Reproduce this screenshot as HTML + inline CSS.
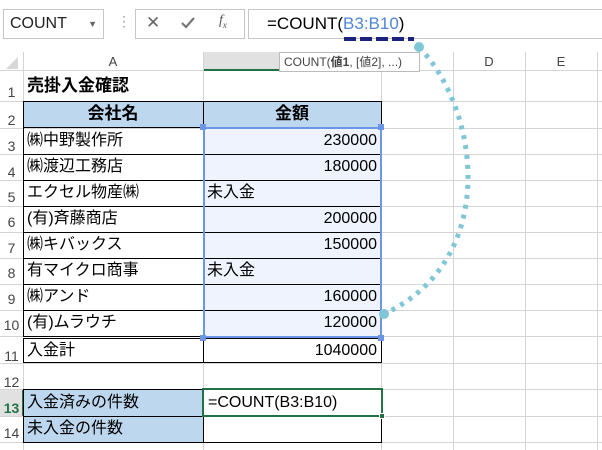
<!DOCTYPE html><html><head><meta charset="utf-8"><style>
body{margin:0;width:602px;height:450px;overflow:hidden;background:#fff;font-family:"Liberation Sans","Noto Sans CJK JP",sans-serif;position:relative}
div{position:absolute;box-sizing:border-box}
.vl{width:1px;background:#d4d4d4}
.hl{height:1px;background:#d4d4d4}
.rh{left:0;width:23px;text-align:center;font-size:14px;color:#444;}
.c{font-size:16px;color:#000;white-space:nowrap;line-height:24px}
.r{text-align:right;padding-right:4px}
</style></head><body>
<div style="left:3px;top:9px;width:101px;height:30px;border:1px solid #c6c6c6;font-size:16px;line-height:28px;padding-left:6px;color:#222">COUNT<span style="position:absolute;right:6px;top:0;font-size:9px;color:#666">▼</span></div>
<div style="left:117px;top:13px;font-size:14px;color:#999">⋮</div>
<div style="left:135px;top:9px;width:110px;height:30px;border:1px solid #c6c6c6"></div>
<div style="left:146px;top:13px;font-size:17px;color:#666">✕</div>
<svg style="position:absolute;left:181px;top:17px" width="14" height="12"><path d="M1 6 L5 10 L13 1" fill="none" stroke="#777" stroke-width="2.2"/></svg>
<div style="left:219px;top:13px;font-size:14px;color:#555;font-style:italic;font-family:'Liberation Serif',serif">f<sub style="font-size:9px">x</sub></div>
<div style="left:248px;top:9px;width:360px;height:30px;border:1px solid #c6c6c6;font-size:17px;line-height:28px;padding-left:18px;color:#000">=COUNT(<span style="color:#4f86d6">B3:B10</span>)</div>
<div style="left:344px;top:37px;width:70px;height:4px;background:repeating-linear-gradient(90deg,#1a237e 0 12px,transparent 12px 16px)"></div>
<div style="left:0;top:52px;width:602px;height:19px;background:#fff;border-bottom:1px solid #d4d4d4"></div>
<div style="left:203px;top:52px;width:178px;height:19px;background:#e1e1e1;border-bottom:2px solid #217346"></div>
<div style="left:6px;top:57px;width:0;height:0;border-left:12px solid transparent;border-bottom:12px solid #d8d8d8"></div>
<div style="left:23px;top:54px;width:180px;text-align:center;font-size:13px;color:#444">A</div>
<div style="left:453px;top:54px;width:72px;text-align:center;font-size:13px;color:#444">D</div>
<div style="left:525px;top:54px;width:72px;text-align:center;font-size:13px;color:#444">E</div>
<div class="vl" style="left:23px;top:52px;height:398px"></div>
<div class="vl" style="left:203px;top:52px;height:398px"></div>
<div class="vl" style="left:381px;top:52px;height:398px"></div>
<div class="vl" style="left:453px;top:52px;height:398px"></div>
<div class="vl" style="left:525px;top:52px;height:398px"></div>
<div class="vl" style="left:597px;top:52px;height:398px"></div>
<div class="hl" style="left:0;top:101px;width:602px"></div>
<div class="hl" style="left:0;top:128px;width:602px"></div>
<div class="hl" style="left:0;top:154px;width:602px"></div>
<div class="hl" style="left:0;top:180px;width:602px"></div>
<div class="hl" style="left:0;top:206px;width:602px"></div>
<div class="hl" style="left:0;top:232px;width:602px"></div>
<div class="hl" style="left:0;top:258px;width:602px"></div>
<div class="hl" style="left:0;top:284px;width:602px"></div>
<div class="hl" style="left:0;top:310px;width:602px"></div>
<div class="hl" style="left:0;top:336px;width:602px"></div>
<div class="hl" style="left:0;top:363px;width:602px"></div>
<div class="hl" style="left:0;top:389px;width:602px"></div>
<div class="hl" style="left:0;top:416px;width:602px"></div>
<div class="hl" style="left:0;top:442px;width:602px"></div>
<div class="rh" style="top:84px">1</div>
<div class="rh" style="top:112px">2</div>
<div class="rh" style="top:138px">3</div>
<div class="rh" style="top:164px">4</div>
<div class="rh" style="top:189px">5</div>
<div class="rh" style="top:214px">6</div>
<div class="rh" style="top:240px">7</div>
<div class="rh" style="top:265px">8</div>
<div class="rh" style="top:291px">9</div>
<div class="rh" style="top:317px">10</div>
<div class="rh" style="top:348px">11</div>
<div class="rh" style="top:374px">12</div>
<div style="left:0;top:390px;width:24px;height:26px;background:#e1e1e1;border-right:2px solid #217346"></div>
<div class="rh" style="top:400px;color:#217346;font-weight:bold">13</div>
<div class="rh" style="top:425px">14</div>
<div class="c" style="left:27px;top:74px;font-weight:bold;font-size:17px">売掛入金確認</div>
<div style="left:23px;top:101px;width:359px;height:27px;background:#bdd7ee;border:1px solid #000"></div>
<div style="left:203px;top:101px;width:1px;height:27px;background:#000"></div>
<div class="c" style="left:23px;top:102px;width:180px;text-align:center;font-weight:bold;font-size:17px">会社名</div>
<div class="c" style="left:203px;top:102px;width:178px;text-align:center;font-weight:bold;font-size:17px">金額</div>
<div style="left:23px;top:128px;width:359px;height:235px;border:1px solid #000;border-top:0"></div>
<div style="left:203px;top:128px;width:179px;height:209px;background:#eef3fd"></div>
<div style="left:203px;top:128px;width:1px;height:235px;background:#000"></div>
<div style="left:23px;top:154px;width:359px;height:1px;background:#000"></div>
<div style="left:23px;top:180px;width:359px;height:1px;background:#000"></div>
<div style="left:23px;top:206px;width:359px;height:1px;background:#000"></div>
<div style="left:23px;top:232px;width:359px;height:1px;background:#000"></div>
<div style="left:23px;top:258px;width:359px;height:1px;background:#000"></div>
<div style="left:23px;top:284px;width:359px;height:1px;background:#000"></div>
<div style="left:23px;top:310px;width:359px;height:1px;background:#000"></div>
<div style="left:23px;top:336px;width:359px;height:3px;border-top:1px solid #000;border-bottom:1px solid #000;background:#fff"></div>
<div class="c" style="left:27px;top:129px">㈱中野製作所</div>
<div class="c" style="left:27px;top:155px">㈱渡辺工務店</div>
<div class="c" style="left:27px;top:181px">エクセル物産㈱</div>
<div class="c" style="left:27px;top:207px">(有)斉藤商店</div>
<div class="c" style="left:27px;top:233px">㈱キバックス</div>
<div class="c" style="left:27px;top:259px">有マイクロ商事</div>
<div class="c" style="left:27px;top:285px">㈱アンド</div>
<div class="c" style="left:27px;top:311px">(有)ムラウチ</div>
<div class="c" style="left:27px;top:339px">入金計</div>
<div class="c r" style="left:203px;top:129px;width:178px">230000</div>
<div class="c r" style="left:203px;top:155px;width:178px">180000</div>
<div class="c" style="left:207px;top:181px">未入金</div>
<div class="c r" style="left:203px;top:207px;width:178px">200000</div>
<div class="c r" style="left:203px;top:233px;width:178px">150000</div>
<div class="c" style="left:207px;top:259px">未入金</div>
<div class="c r" style="left:203px;top:285px;width:178px">160000</div>
<div class="c r" style="left:203px;top:311px;width:178px">120000</div>
<div class="c r" style="left:203px;top:339px;width:178px">1040000</div>
<div style="left:203px;top:127px;width:179px;height:211px;border:2px solid #6b95e6"></div>
<div style="left:200px;top:124px;width:6px;height:6px;background:#6b95e6"></div>
<div style="left:378px;top:124px;width:6px;height:6px;background:#6b95e6"></div>
<div style="left:200px;top:335px;width:6px;height:6px;background:#6b95e6"></div>
<div style="left:378px;top:335px;width:6px;height:6px;background:#6b95e6"></div>
<div style="left:23px;top:389px;width:359px;height:54px;border:1px solid #000"></div>
<div style="left:24px;top:390px;width:179px;height:52px;background:#bdd7ee"></div>
<div style="left:203px;top:389px;width:1px;height:54px;background:#000"></div>
<div style="left:23px;top:416px;width:359px;height:1px;background:#000"></div>
<div class="c" style="left:27px;top:391px">入金済みの件数</div>
<div class="c" style="left:27px;top:417px">未入金の件数</div>
<div style="left:202px;top:388px;width:181px;height:29px;border:2px solid #217346"></div>
<div style="left:379px;top:413px;width:6px;height:6px;background:#217346;border:1px solid #fff"></div>
<div class="c" style="left:208px;top:391px">=COUNT(B3:B10)</div>
<div style="left:279px;top:52px;width:141px;height:20px;background:#fff;border:1px solid #bbb;font-size:12px;line-height:18px;padding-left:4px;color:#444;white-space:nowrap">COUNT(<b>値1</b>, [値2], ...)</div>
<svg style="position:absolute;left:0;top:0" width="602" height="450"><path d="M419 47 C480 110 500 260 384 314" fill="none" stroke="#7fc6d8" stroke-width="5" stroke-dasharray="4 6"/><circle cx="419" cy="47" r="5" fill="#7fc6d8"/><circle cx="384" cy="314" r="5" fill="#7fc6d8"/></svg>
</body></html>
